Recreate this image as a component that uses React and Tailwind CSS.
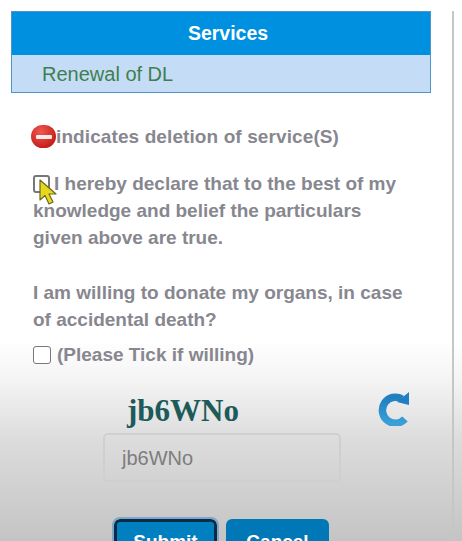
function DeleteIcon() {
  return (
    <span className="w-[25px] h-[23px] shrink-0 rounded-full bg-[radial-gradient(circle_at_40%_30%,#ef5a50,#c9211c_70%,#a81a18)] flex items-center justify-center">
      <span className="w-[16px] h-[4px] bg-white/90 rounded-[1px]" />
    </span>
  )
}

function Cursor() {
  return (
    <svg className="absolute left-[38px] top-[179px]" width="21" height="28" viewBox="0 0 21 28">
      <path d="M2 1 L2 21 L7 16.5 L11 25 L15 23 L11 15 L18 15 Z" fill="#e8d81c" stroke="#6a6a20" strokeWidth="1.2" strokeLinejoin="round" />
    </svg>
  )
}

function RefreshIcon() {
  return (
    <svg className="ml-[138px] mt-[-6px]" width="34" height="35" viewBox="0 0 34 35">
      <defs>
        <linearGradient id="refresh" x1="0" y1="0" x2="0" y2="1">
          <stop offset="0" stopColor="#1f7fc0" />
          <stop offset="1" stopColor="#3aa0d6" />
        </linearGradient>
      </defs>
      <path d="M28 28 A13 13 0 1 1 25 8" fill="none" stroke="url(#refresh)" strokeWidth="7.5" />
      <path d="M32 1 L32 14 L20 11 Z" fill="#1f7fc0" />
    </svg>
  )
}

export default function App() {
  return (
    <div className="relative h-[541px] overflow-hidden bg-[linear-gradient(to_bottom,#ffffff_0,#ffffff_340px,#f4f4f4_380px,#dcdcdc_440px,#c4c4c4_541px)] font-['Liberation_Sans',Arial,sans-serif]">
      <div className="pt-[10px] h-full">
        <div className="w-[454px] h-full border-r-2 border-[#c6c6c6] pl-[11px] pr-[21px]">
          {/* Services table */}
          <div className="border border-[#4d95c8] mt-[1px]">
            <div className="h-[43px] bg-[#0090e0] flex items-center justify-center pl-[14px] text-white font-bold text-[19.5px]">
              Services
            </div>
            <div className="h-[37px] bg-[#c5dcf6] flex items-center pl-[30px] text-[20px] text-[#3f7f4f]">
              Renewal of DL
            </div>
          </div>

          <div className="text-[19px] leading-[27px] font-bold text-[#87878f]">
            <div className="flex items-center mt-[30px] ml-[20px] -mr-[20px]">
              <DeleteIcon />
              <span className="tracking-[0.1px]">indicates deletion of service(S)</span>
            </div>

            <div className="mt-[20px] ml-[22px] mr-[21px]">
              <input type="checkbox" readOnly className="appearance-none w-[17px] h-[18px] mr-[4px] align-[-3px] border-2 border-[#77777c] rounded-[3px] bg-white" />
              <span>I hereby declare that to the best of my knowledge and belief the particulars given above are true.</span>
            </div>

            <div className="mt-[28px] ml-[22px] mr-[21px]">
              I am willing to donate my organs, in case of accidental death?
            </div>

            <div className="flex items-center mt-[8px] ml-[22px]">
              <input type="checkbox" readOnly className="appearance-none w-[18px] h-[18px] mr-[6px] border border-[#77777c] rounded-[3px] bg-white" />
              <span>(Please Tick if willing)</span>
            </div>
          </div>

          <div className="flex items-center mt-[25px]">
            <div className="ml-[116px] font-['Liberation_Serif',serif] font-bold text-[31px] leading-[36px] text-[#1d5a5a]">
              jb6WNo
            </div>
            <RefreshIcon />
          </div>

          <div className="ml-[92px] mt-[4px] w-[238px] h-[49px] border-2 border-[#cfcfcf] rounded-[5px] flex items-center pl-[17px] text-[20px] text-[#7d7d7d]">
            jb6WNo
          </div>

          <div className="flex ml-[103px] mt-[37px] gap-[9px]">
            <button className="w-[103px] h-[46px] border-[3px] border-[#0b2a45] rounded-[6px] bg-[#0080c0] text-white font-bold text-[19px] outline-[2px] outline-[#7fa8c8]">
              Submit
            </button>
            <button className="w-[103px] h-[46px] rounded-[6px] bg-[#0078b8] text-white font-bold text-[19px]">
              Cancel
            </button>
          </div>
        </div>
      </div>
      <Cursor />
    </div>
  )
}
